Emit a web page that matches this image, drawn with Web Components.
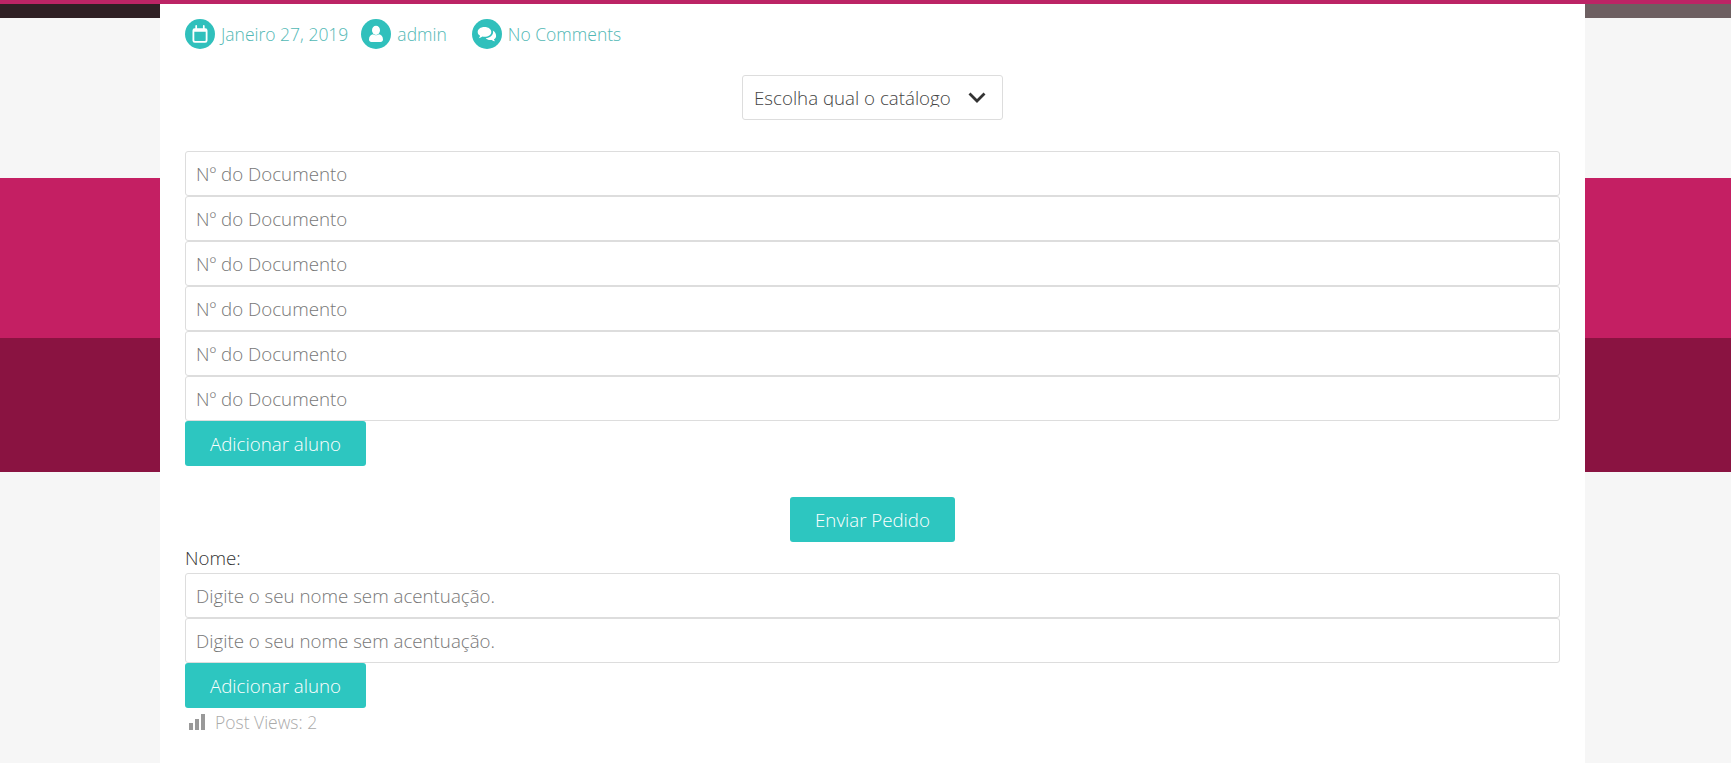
<!DOCTYPE html>
<html lang="pt">
<head>
<meta charset="utf-8">
<title>Pedido</title>
<style>
html,body{margin:0;padding:0;height:100%;overflow:hidden}
body{font-family:"Open Sans","Liberation Sans",sans-serif;font-weight:300;background:#f6f6f6}
</style>
</head>
<body>
<page-shell>
  <post-card>
    <post-meta>
      <meta-item icon="calendar" style="--gap:6px;--after:13px">Janeiro 27, 2019</meta-item>
      <meta-item icon="user" style="--gap:6px;--after:25px">admin</meta-item>
      <meta-item icon="comments" style="--gap:6px;--after:0px">No Comments</meta-item>
    </post-meta>
    <catalog-select>Escolha qual o catálogo</catalog-select>
    <field-row>Nº do Documento</field-row>
    <field-row>Nº do Documento</field-row>
    <field-row>Nº do Documento</field-row>
    <field-row>Nº do Documento</field-row>
    <field-row>Nº do Documento</field-row>
    <field-row>Nº do Documento</field-row>
    <action-button>Adicionar aluno</action-button>
    <action-button center style="margin-top:31px">Enviar Pedido</action-button>
    <form-label>Nome:</form-label>
    <field-row>Digite o seu nome sem acentuação.</field-row>
    <field-row>Digite o seu nome sem acentuação.</field-row>
    <action-button>Adicionar aluno</action-button>
    <post-views>Post Views: 2</post-views>
  </post-card>
</page-shell>
<script>
const def=(name,html)=>{
  customElements.define(name,class extends HTMLElement{
    constructor(){super();this.attachShadow({mode:"open"}).innerHTML=typeof html==="function"?html(this):html;}
  });
};
const ICONS={
  calendar:`<svg viewBox="0 0 30 30" width="30" height="30"><circle cx="15" cy="15" r="15" fill="#30c0bc"/><path fill="#fff" d="M9.800 9.200h10.400a2.300 2.300 0 0 1 2.300 2.300v9.900a2.300 2.300 0 0 1-2.300 2.300H9.800a2.300 2.300 0 0 1-2.300-2.300v-9.900a2.300 2.300 0 0 1 2.300-2.300zM9.300 12.800v8.100c0 .6.400 1 1 1h9.400c.6 0 1-.4 1-1v-8.100z" fill-rule="evenodd"/><path fill="none" stroke="#fff" stroke-width="1.700" stroke-linecap="round" d="M11.200 6.900v3.300M18.800 6.900v3.300"/></svg>`,
  user:`<svg viewBox="0 0 30 30" width="30" height="30"><circle cx="15" cy="15" r="15" fill="#30c0bc"/><ellipse cx="15" cy="11.300" rx="4" ry="4.600" fill="#fff"/><path fill="#fff" d="M8 20.500c0-3.300 2.100-5 4-5.200 1.800 1.300 4.200 1.300 6 0 1.900.2 4 1.900 4 5.200 0 1.500-1 2.500-2.400 2.500h-9.200C9 23 8 22 8 20.500z"/></svg>`,
  comments:`<svg viewBox="0 0 30 30" width="30" height="30"><circle cx="15" cy="15" r="15" fill="#30c0bc"/><path fill="#fff" d="M12.500 8c-4 0-6.800 2.200-6.800 5 0 1.600.9 2.900 2.400 3.800-.2.900-.7 1.700-1.300 2.400 1.400-.2 2.700-.8 3.700-1.600.6.100 1.300.2 2 .2 4 0 6.800-2.100 6.800-4.800S16.500 8 12.500 8z"/><path fill="#fff" d="M20.800 11.500c.2.500.3 1 .3 1.500 0 3.300-3.100 5.900-7.400 6.200 1 1.100 2.700 1.800 4.600 1.800.5 0 1 0 1.500-.1.900.7 2 1.200 3.200 1.400-.5-.6-.9-1.300-1.100-2 1.400-.8 2.200-2 2.200-3.400 0-2.300-1.200-4.200-3.300-5.400z"/></svg>`
};
def("page-shell",`<style>
:host{display:block;box-sizing:border-box;height:763px;padding:4px 0 0 160px;background:
 linear-gradient(#bc2465 0 0) 0 0/100% 4px no-repeat,
 linear-gradient(90deg,#2f2024 0 160px,#6d5f61 160px) 0 4px/100% 14px no-repeat,
 linear-gradient(#f6f6f6 0 178px,#c41f63 178px 338px,#8a1341 338px 472px,#f6f6f6 472px);}
</style><slot></slot>`);
def("post-card",`<style>
:host{display:flex;flex-direction:column;box-sizing:border-box;width:1425px;height:759px;padding:15px 25px 0;background:#fff;color:#444}
</style><slot></slot>`);
def("post-meta",`<style>:host{display:flex;align-items:center;height:30px}</style><slot></slot>`);
def("meta-item",el=>`<style>
:host{display:flex;align-items:center;gap:var(--gap);margin-right:var(--after);color:#52b8b5;font-size:17.5px;line-height:30px;white-space:nowrap}
svg{display:block;flex:none}
</style>${ICONS[el.getAttribute("icon")]}<span><slot></slot></span>`);
def("catalog-select",`<style>
:host{display:flex;align-items:flex-start;box-sizing:border-box;align-self:center;width:261px;height:45px;margin:26px 0 31px;padding:0 16px 0 11px;border:1px solid #ddd;border-radius:3px;background:#fff;color:#444;font-size:18.72px;white-space:nowrap}
span{display:block;flex:1;height:20px;margin-top:11px;line-height:22px;overflow:hidden}
svg{display:block;margin-top:16px}
</style><span><slot></slot></span><svg width="18" height="11" viewBox="0 0 18 11"><path d="M1.500 1.500 9 9l7.500-7.500" fill="none" stroke="#333" stroke-width="2.800"/></svg>`);
def("field-row",`<style>
:host{display:flex;align-items:center;box-sizing:border-box;height:45px;padding:0 10px;border:1px solid #ddd;border-radius:3px;background:#fff;color:#777;font-size:18.72px;white-space:nowrap}
</style><slot></slot>`);
def("action-button",`<style>
:host{display:flex;align-items:center;justify-content:center;box-sizing:border-box;align-self:flex-start;height:45px;padding:0 25px;border-radius:3px;background:#2dc6c0;color:#fff;font-size:18.72px;white-space:nowrap}
:host([center]){align-self:center}
</style><slot></slot>`);
def("form-label",`<style>:host{display:block;height:31px;line-height:32px;color:#333;font-size:18.72px}</style><slot></slot>`);
def("post-views",`<style>
:host{display:flex;align-items:center;gap:9px;height:28px;padding-left:4px;color:#aaa;font-size:17.5px}
svg{display:block}
</style><svg width="17" height="16" viewBox="0 0 17 16"><path fill="#999" d="M0 9h4v7H0zM6 5h4v11H6zM12 0h4v16h-4z"/></svg><span><slot></slot></span>`);
</script>
</body>
</html>
